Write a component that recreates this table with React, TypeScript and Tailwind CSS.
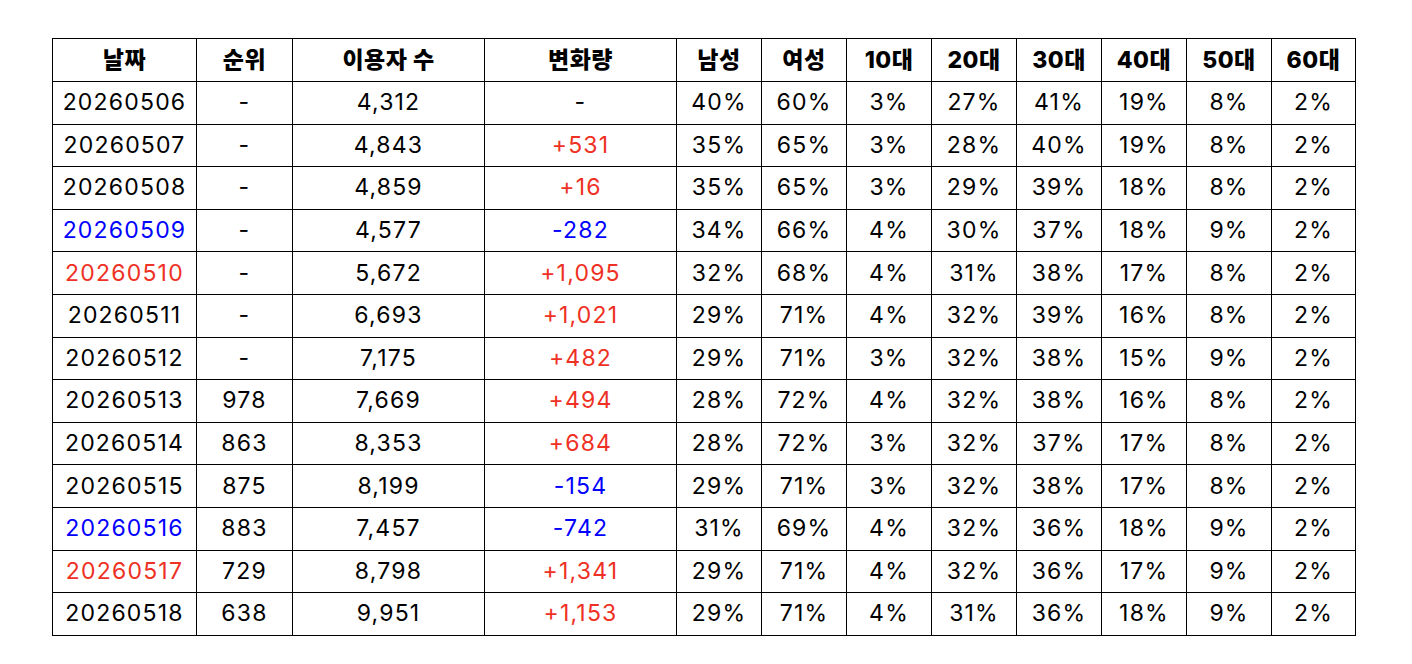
import React from "react";

type Row = {
  d: string;
  dc?: "r" | "b";
  rank: string;
  users: string;
  diff: string;
  xc?: "r" | "b";
  vals: string[];
};

const rows: Row[] = [
  { d: "20260506", rank: "-", users: "4,312", diff: "-", vals: ["40%", "60%", "3%", "27%", "41%", "19%", "8%", "2%"] },
  { d: "20260507", rank: "-", users: "4,843", diff: "+531", xc: "r", vals: ["35%", "65%", "3%", "28%", "40%", "19%", "8%", "2%"] },
  { d: "20260508", rank: "-", users: "4,859", diff: "+16", xc: "r", vals: ["35%", "65%", "3%", "29%", "39%", "18%", "8%", "2%"] },
  { d: "20260509", dc: "b", rank: "-", users: "4,577", diff: "-282", xc: "b", vals: ["34%", "66%", "4%", "30%", "37%", "18%", "9%", "2%"] },
  { d: "20260510", dc: "r", rank: "-", users: "5,672", diff: "+1,095", xc: "r", vals: ["32%", "68%", "4%", "31%", "38%", "17%", "8%", "2%"] },
  { d: "20260511", rank: "-", users: "6,693", diff: "+1,021", xc: "r", vals: ["29%", "71%", "4%", "32%", "39%", "16%", "8%", "2%"] },
  { d: "20260512", rank: "-", users: "7,175", diff: "+482", xc: "r", vals: ["29%", "71%", "3%", "32%", "38%", "15%", "9%", "2%"] },
  { d: "20260513", rank: "978", users: "7,669", diff: "+494", xc: "r", vals: ["28%", "72%", "4%", "32%", "38%", "16%", "8%", "2%"] },
  { d: "20260514", rank: "863", users: "8,353", diff: "+684", xc: "r", vals: ["28%", "72%", "3%", "32%", "37%", "17%", "8%", "2%"] },
  { d: "20260515", rank: "875", users: "8,199", diff: "-154", xc: "b", vals: ["29%", "71%", "3%", "32%", "38%", "17%", "8%", "2%"] },
  { d: "20260516", dc: "b", rank: "883", users: "7,457", diff: "-742", xc: "b", vals: ["31%", "69%", "4%", "32%", "36%", "18%", "9%", "2%"] },
  { d: "20260517", dc: "r", rank: "729", users: "8,798", diff: "+1,341", xc: "r", vals: ["29%", "71%", "4%", "32%", "36%", "17%", "9%", "2%"] },
  { d: "20260518", rank: "638", users: "9,951", diff: "+1,153", xc: "r", vals: ["29%", "71%", "4%", "31%", "36%", "18%", "9%", "2%"] },
];

const headers = ["날짜", "순위", "이용자 수", "변화량", "남성", "여성", "10대", "20대", "30대", "40대", "50대", "60대"];
const widths = ["w-[144px]", "w-[96px]", "w-[192px]", "w-[192px]", "w-[85px]", "w-[85px]", "w-[85px]", "w-[85px]", "w-[85px]", "w-[85px]", "w-[85px]", "w-[84px]"];

const color = (c?: "r" | "b") => (c === "r" ? "text-[#ee3124]" : c === "b" ? "text-[#0000ff]" : "text-black");

export default function App() {
  return (
    <div className="w-[1412px] h-[664px] bg-white pt-[38px] pl-[52px]" style={{ fontFamily: "Inter, 'Noto Sans CJK KR', sans-serif" }}>
      <table className="border-collapse table-fixed w-[1303px] text-[23px] tracking-[1.2px] text-black">
        <colgroup>
          {widths.map((w, i) => (
            <col key={i} className={w} />
          ))}
        </colgroup>
        <thead>
          <tr className="h-[43px]">
            {headers.map((h) => (
              <th key={h} className="border border-black font-extrabold tracking-[0.5px] text-center p-0 leading-none">
                {h}
              </th>
            ))}
          </tr>
        </thead>
        <tbody>
          {rows.map((r) => (
            <tr key={r.d} className="h-[42.6px]">
              <td className={`border border-black text-center p-0 leading-none ${color(r.dc)}`}>{r.d}</td>
              <td className="border border-black text-center p-0 leading-none">{r.rank}</td>
              <td className="border border-black text-center p-0 leading-none">{r.users}</td>
              <td className={`border border-black text-center p-0 leading-none ${color(r.xc)}`}>{r.diff}</td>
              {r.vals.map((v, i) => (
                <td key={i} className="border border-black text-center p-0 leading-none">
                  {v}
                </td>
              ))}
            </tr>
          ))}
        </tbody>
      </table>
    </div>
  );
}
